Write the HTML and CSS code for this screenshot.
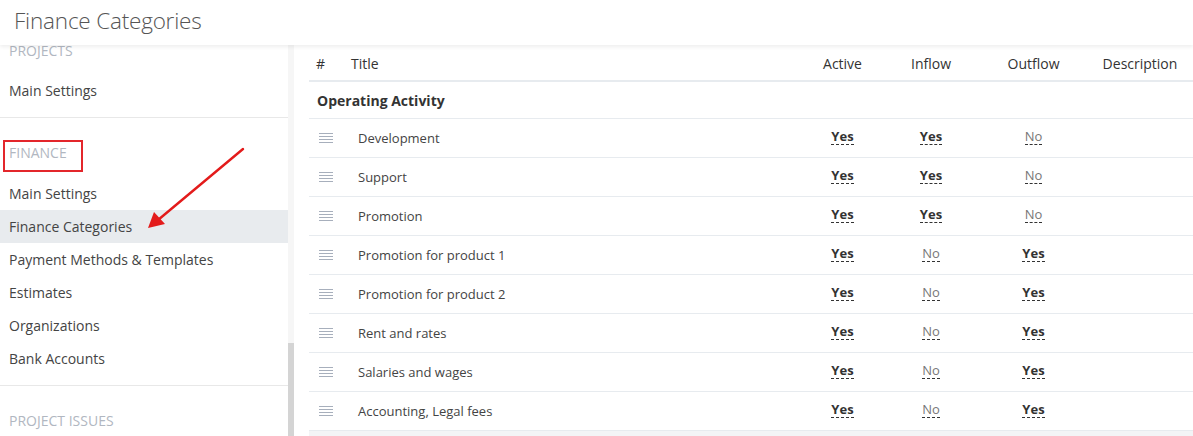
FILE: index.html
```html
<!DOCTYPE html>
<html lang="en">

<head>
    <meta charset="UTF-8">
    <meta name="viewport" content="width=device-width, initial-scale=1.0">
    <title>Finance Categories</title>
    <link rel="stylesheet" href="styles.css">
</head>

<body>
    <header class="page-header">
        <h1 class="page-title">Finance Categories</h1>
    </header>

    <div class="layout">
        <aside class="sidebar">
            <nav class="sidebar-nav">
                <section class="nav-group">
                    <div class="nav-label">Projects</div>
                    <a class="nav-item" href="#">Main Settings</a>
                </section>
                <section class="nav-group">
                    <div class="nav-label"><span class="marked">Finance</span></div>
                    <a class="nav-item" href="#">Main Settings</a>
                    <a class="nav-item active" href="#">Finance Categories</a>
                    <a class="nav-item" href="#">Payment Methods &amp; Templates</a>
                    <a class="nav-item" href="#">Estimates</a>
                    <a class="nav-item" href="#">Organizations</a>
                    <a class="nav-item" href="#">Bank Accounts</a>
                </section>
                <section class="nav-group last">
                    <div class="nav-label">Project Issues</div>
                </section>
            </nav>
        </aside>

        <div class="scroll-track">
            <div class="scroll-thumb"></div>
        </div>

        <main class="content">
            <div class="cat-table">
                <div class="cat-row head-row">
                    <div class="cell hash">#</div>
                    <div class="cell">Title</div>
                    <div class="cell center">Active</div>
                    <div class="cell center">Inflow</div>
                    <div class="cell center">Outflow</div>
                    <div class="cell center">Description</div>
                </div>

                <div class="cat-row group-row">
                    <div class="cell group-title">Operating Activity</div>
                </div>

                <div class="js-rows"></div>

                <div class="cat-row group-row grey"></div>
            </div>
        </main>
    </div>

    <!-- annotation arrow -->
    <svg class="arrow" width="110" height="95" viewBox="0 0 110 95">
        <line x1="103" y1="7" x2="18" y2="78" stroke="#e31b1b" stroke-width="2.4" stroke-linecap="round" />
        <polygon points="8,86 14,70 25,82" fill="#e31b1b" />
    </svg>

    <script>
        const rows = [
            ['Development', true, true, false],
            ['Support', true, true, false],
            ['Promotion', true, true, false],
            ['Promotion for product 1', true, false, true],
            ['Promotion for product 2', true, false, true],
            ['Rent and rates', true, false, true],
            ['Salaries and wages', true, false, true],
            ['Accounting, Legal fees', true, false, true]
        ];

        const handle = `<svg class="drag" width="14" height="11" viewBox="0 0 14 11">
            <path d="M0 0.5h14M0 3.5h14M0 6.5h14M0 9.5h14" stroke="#a7afbc" stroke-width="1" />
        </svg>`;

        function flag(value) {
            return value
                ? '<span class="flag yes">Yes</span>'
                : '<span class="flag no">No</span>';
        }

        const list = document.querySelector('.js-rows');
        rows.forEach(([title, active, inflow, outflow]) => {
            list.insertAdjacentHTML('beforeend',
                `<div class="cat-row item-row">
                    <div class="cell">${handle}</div>
                    <div class="cell item-title">${title}</div>
                    <div class="cell center">${flag(active)}</div>
                    <div class="cell center">${flag(inflow)}</div>
                    <div class="cell center">${flag(outflow)}</div>
                    <div class="cell"></div>
                </div>`);
        });
    </script>
</body>

</html>
```

FILE: styles.css
```css
html {
    box-sizing: border-box;
}

*,
*::before,
*::after {
    box-sizing: inherit;
    margin: 0;
    padding: 0;
}

:root {
    --text: #444;
    --muted: #b1b7c1;
    --line: #e7ebef;
    --active-bg: #e8ebee;
}

body {
    font-family: 'Open Sans', sans-serif;
    font-size: 14px;
    color: var(--text);
    background: #fff;
    height: 436px;
    overflow: hidden;
    position: relative;
}

.page-header {
    position: relative;
    z-index: 2;
    height: 45px;
    background: #fff;
    box-shadow: 0 2px 4px rgba(0, 0, 0, 0.07);
    padding: 0 0 4px 14px;
    display: flex;
    align-items: center;
}

.page-title {
    font-size: 22.5px;
    font-weight: 300;
    color: #555;
    letter-spacing: -0.2px;
}

.layout {
    display: flex;
    height: 391px;
}

/* sidebar */

.sidebar {
    width: 288px;
    overflow: hidden;
}

.sidebar-nav {
    margin-top: -29px;
}

.nav-group {
    border-bottom: 1px solid #e8e8e8;
    padding-bottom: 10px;
}

.nav-group.last {
    border-bottom: 0;
}

.nav-label {
    padding: 25px 9px 14px;
    line-height: 19px;
    text-transform: uppercase;
    color: var(--muted);
}

.marked {
    display: inline-block;
    margin: -3px 0 -9px -6px;
    padding: 1px 14px 8px 4px;
    border: 2px solid #e3262b;
}

.nav-item {
    display: block;
    height: 33px;
    line-height: 33px;
    padding-left: 9px;
    color: var(--text);
    text-decoration: none;
}

.nav-item.active {
    background: var(--active-bg);
}

.scroll-track {
    width: 6px;
    background: #f6f6f6;
    display: flex;
    flex-direction: column;
    justify-content: flex-end;
}

.scroll-thumb {
    height: 93px;
    background: #d4d4d4;
}

/* table */

.content {
    flex: 1;
    padding-left: 15px;
}

.cat-row {
    display: grid;
    grid-template-columns: 34px 1fr 79px 98px 107px 106px;
    align-items: center;
    border-bottom: 1px solid var(--line);
}

.cell {
    padding-left: 8px;
    white-space: nowrap;
}

.cell.center {
    padding-left: 0;
    text-align: center;
}

.head-row {
    height: 37px;
    padding-top: 1px;
    border-bottom-width: 2px;
    color: #333;
}

.head-row .hash {
    padding-left: 7px;
}

.group-row {
    height: 37px;
}

.group-row.grey {
    background: #f3f4f6;
}

.group-title {
    grid-column: 1 / -1;
    font-weight: 700;
    color: #333;
}

.item-row {
    height: 39px;
    font-size: 13px;
}

.drag {
    display: block;
    margin-left: 2px;
}

.item-title {
    padding-left: 15px;
}

.flag {
    border-bottom: 1px dashed #333;
    line-height: 16px;
    display: inline-block;
    margin-top: -1px;
    vertical-align: top;
}

.flag.yes {
    font-weight: 700;
    color: #333;
}

.flag.no {
    color: #777;
}

.arrow {
    position: absolute;
    left: 140px;
    top: 142px;
}
```
